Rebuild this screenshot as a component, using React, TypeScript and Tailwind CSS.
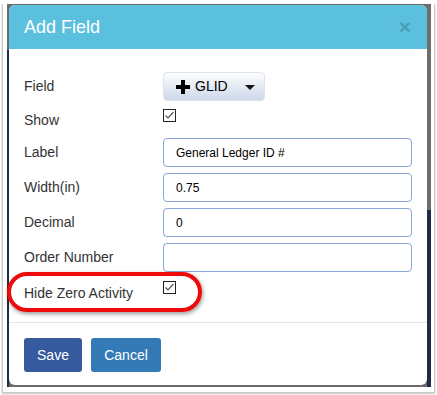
import React from "react";

const CheckBox = () => (
    <svg width="13" height="13" viewBox="0 0 13 13" className="block">
        <rect x="0.5" y="0.5" width="12" height="12" fill="#fff" stroke="#222" />
        <polyline points="2.5,6.5 5,9 10.5,3" fill="none" stroke="#555" strokeWidth="1.2" />
    </svg>
);

const TextRow = ({ label, value }: { label: string; value: string }) => (
    <div className="flex items-center h-[29px] mt-[6px]">
        <div className="w-[139px] text-[14px] text-[#333]">{label}</div>
        <div className="flex-1 h-[29px] border border-[#88a6da] rounded-[4px] pl-[12px] flex items-center text-[12px] text-black">
            {value}
        </div>
    </div>
);

const App: React.FC = () => {
    return (
        <div className="w-[437px] h-[395px] bg-white font-['Liberation_Sans',Arial,sans-serif]">
            <div className="ml-[2px] mt-[4px] w-[433px] h-[389px] border-x border-b border-[#c8c8c8] shadow-[0_1px_2px_rgba(0,0,0,0.25)] pl-[4px] pr-[3px]">
                {/* backdrop behind the dialog */}
                <div className="flex h-[383px] bg-[#6a6a6a] pt-[1px]">
                    <div className="w-[2px] flex flex-col">
                        <div className="h-[45px] bg-[#6a6a6a]" />
                        <div className="flex-1 bg-[#1d2c47]" />
                    </div>

                    <div className="w-[418px] h-[380px] bg-white rounded-[6px] flex flex-col">
                        <div className="h-[44px] bg-[#5bc0de] rounded-t-[6px] pl-[15px] pr-[16px] flex items-center justify-between">
                            <span className="text-[18px] text-white">Add Field</span>
                            <span className="text-[21px] font-bold leading-none text-black/20 mb-[2px]">×</span>
                        </div>

                        <div className="pl-[15px] pr-[15px] pt-[23px] pb-[17px]">
                            <div className="flex items-center h-[29px]">
                                <div className="w-[139px] text-[14px] text-[#333]">Field</div>
                                <div className="w-[102px] h-[29px] rounded-[4px] border border-[#dde3ee] bg-linear-to-b from-[#fdfdfe] to-[#cdd8ea] flex items-center pl-[12px]">
                                    <svg width="14" height="14" viewBox="0 0 14 14" className="mr-[5px]">
                                        <rect x="5" y="0" width="4" height="14" fill="#000" />
                                        <rect x="0" y="5" width="14" height="4" fill="#000" />
                                    </svg>
                                    <span className="text-[14px] text-black">GLID</span>
                                    <svg width="10" height="5" viewBox="0 0 10 5" className="ml-[17px] mt-[2px]">
                                        <polygon points="0,0 10,0 5,5" fill="#111" />
                                    </svg>
                                </div>
                            </div>

                            <div className="flex items-start h-[22px] mt-[8px]">
                                <div className="w-[139px] text-[14px] leading-[22px] text-[#333]">Show</div>
                                <CheckBox />
                            </div>

                            <div className="h-[1px]" />
                            <TextRow label="Label" value="General Ledger ID #" />
                            <TextRow label="Width(in)" value="0.75" />
                            <TextRow label="Decimal" value="0" />
                            <TextRow label="Order Number" value="" />

                            <div className="relative flex items-start h-[24px] mt-[9px]">
                                <div className="w-[139px] text-[14px] leading-[24px] text-[#333]">Hide Zero Activity</div>
                                <CheckBox />
                                {/* red callout round the row */}
                                <div className="absolute left-[-17px] top-[-9px] w-[195px] h-[40px] border-[4px] border-[#ee0a0a] rounded-[20px] shadow-[1px_2px_4px_rgba(0,0,0,0.4)]" />
                            </div>
                        </div>

                        <div className="border-t border-[#e5e5e5] px-[15px] pt-[15px] flex gap-[9px]">
                            <button className="w-[58px] h-[34px] rounded-[3px] bg-[#365a9e] text-white text-[14px]">Save</button>
                            <button className="w-[70px] h-[34px] rounded-[3px] bg-[#337ab7] text-white text-[14px]">Cancel</button>
                        </div>
                    </div>

                    <div className="w-[4px] flex flex-col">
                        <div className="h-[205px] bg-[#6e6e6e]" />
                        <div className="flex-1 bg-[#1d2c47]" />
                    </div>
                </div>
            </div>
        </div>
    );
};

export default App;
